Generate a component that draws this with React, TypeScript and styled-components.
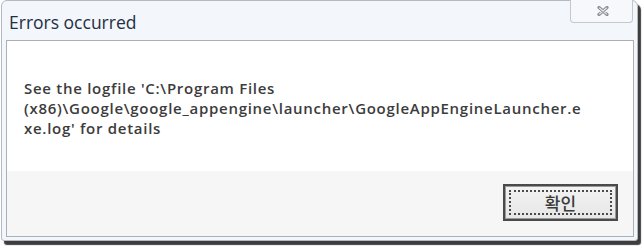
import React from "react";
import styled, { createGlobalStyle } from "styled-components";

const Global = createGlobalStyle`
  html, body { margin: 0; padding: 0; background: #ffffff; }
  body { width: 644px; height: 248px; overflow: hidden; }
`;

const Page = styled.div`
  padding: 0 0 0 1px;
`;

const Window = styled.div`
  box-sizing: border-box;
  width: 637px;
  height: 241px;
  border: 1px solid #b4bac3;
  border-radius: 6px 6px 3px 3px;
  background: #f3f6fa;
  box-shadow: 3px 4px 1px 0 #3d3d3d;
  display: flex;
  flex-direction: column;
  padding: 0 3px 3px 4px;
`;

const TitleBar = styled.div`
  height: 39px;
  display: flex;
  align-items: flex-start;
  justify-content: space-between;
  flex-shrink: 0;
`;

const Title = styled.div`
  font-family: "Open Sans", "Noto Sans", sans-serif;
  font-size: 17.5px;
  color: #1f2f44;
  padding: 9px 0 0 3px;
`;

const CloseButton = styled.div`
  box-sizing: border-box;
  width: 63px;
  height: 23px;
  margin-top: -1px;
  margin-right: 1px;
  border: 1px solid #c3c8cf;
  border-top: none;
  border-radius: 0 0 4px 4px;
  background: #f6f8fb;
  display: flex;
  align-items: center;
  justify-content: center;
  padding-left: 2px;
`;

const Client = styled.div`
  flex: 1;
  border: 1px solid #a9b0b8;
  background: #ffffff;
  display: flex;
  flex-direction: column;
`;

const Message = styled.div`
  height: 130px;
  box-sizing: border-box;
  padding: 37px 0 0 17px;
  font-family: "Open Sans", "Noto Sans", sans-serif;
  font-size: 15px;
  font-weight: 600;
  letter-spacing: 0.72px;
  line-height: 20px;
  color: #3c3c3c;
`;

const Line = styled.div`
  white-space: nowrap;
`;

const Footer = styled.div`
  flex: 1;
  background: #f6f6f6;
  display: flex;
  align-items: flex-start;
  justify-content: flex-end;
  padding: 13px 15px 0 0;
`;

const Button = styled.div`
  box-sizing: border-box;
  width: 115px;
  height: 37px;
  border: 2px solid #4a4a4a;
  box-shadow: inset 0 0 0 1px #9a9a9a;
  background: linear-gradient(#f3f3f3, #e6e6e6);
  display: flex;
  padding: 4px;
`;

const Focus = styled.div`
  flex: 1;
  border: 2px dotted #4a4a4a;
  display: flex;
  align-items: center;
  justify-content: center;
  font-family: "Noto Sans CJK KR", sans-serif;
  font-size: 17px;
  font-weight: 500;
  color: #3a3a3a;
  line-height: 1;
`;

export default function App() {
  return (
    <>
      <Global />
      <Page>
        <Window>
          <TitleBar>
            <Title>Errors occurred</Title>
            <CloseButton>
              <svg width="12" height="10" viewBox="0 0 12 10">
                <path d="M2 1.5 L10 8.5 M10 1.5 L2 8.5" stroke="#8c9097" strokeWidth="3.2" strokeLinecap="round" />
                <path d="M2.5 2 L9.5 8 M9.5 2 L2.5 8" stroke="#e4e6ea" strokeWidth="1.1" strokeLinecap="round" />
              </svg>
            </CloseButton>
          </TitleBar>
          <Client>
            <Message>
              <Line>See the logfile 'C:\Program Files</Line>
              <Line>(x86)\Google\google_appengine\launcher\GoogleAppEngineLauncher.e</Line>
              <Line>xe.log' for details</Line>
            </Message>
            <Footer>
              <Button>
                <Focus>확인</Focus>
              </Button>
            </Footer>
          </Client>
        </Window>
      </Page>
    </>
  );
}
